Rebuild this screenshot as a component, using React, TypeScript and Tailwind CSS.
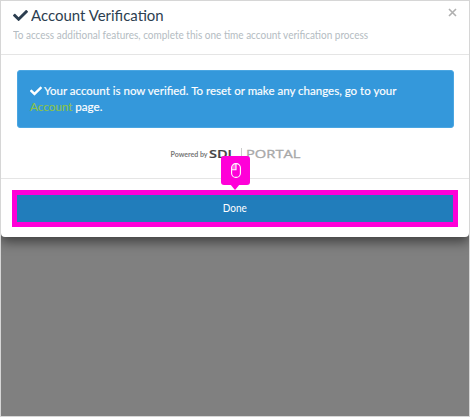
import { FaCheck } from "react-icons/fa";

function MouseIcon() {
  return (
    <svg width="10" height="15" viewBox="0 0 10 15" fill="none" stroke="white">
      <path d="M1 6.5V4.5Q1 1 5 0.8V6.5Z" fill="white" fillOpacity="0.35" stroke="none" />
      <rect x="0.6" y="0.6" width="8.8" height="13.8" rx="4.2" strokeWidth="1.1" />
      <path d="M1 6.8H5V1" strokeWidth="1.1" />
    </svg>
  );
}

function PoweredBy() {
  return (
    <svg width="132" height="14" viewBox="0 0 132 14" className="block">
      <text x="0.5" y="9.6" fontFamily="Lato, sans-serif" fontSize="7.2" fontWeight="700" fill="#777777" textLength="37" lengthAdjust="spacingAndGlyphs">
        Powered by
      </text>
      <text x="39" y="11.3" fontFamily="Open Sans, sans-serif" fontSize="11.5" fontWeight="600" fill="#444444" stroke="#444444" strokeWidth="0.2" textLength="26.5" lengthAdjust="spacingAndGlyphs">
        SDL
      </text>
      <path d="M71.5 1V13" stroke="#cccccc" strokeWidth="1" />
      <text x="76" y="11.3" fontFamily="Open Sans, sans-serif" fontSize="11.5" fill="#a8a8a8" stroke="#a8a8a8" strokeWidth="0.3" textLength="54.5" lengthAdjust="spacingAndGlyphs">
        PORTAL
      </text>
    </svg>
  );
}

export default function App() {
  return (
    <div className="h-[417px] w-[470px] overflow-hidden border border-[#d6d6d6] bg-[#808080] font-['Lato',sans-serif]">
      <div className="flex h-[236px] flex-col rounded-b-[4px] bg-white shadow-[0_5px_12px_rgba(0,0,0,0.5)]">
        <header className="flex h-[54px] shrink-0 justify-between border-b border-[#e5e5e5] px-[12px]">
          <div>
            <h1 className="mt-[3px] flex h-[22px] items-center gap-[3px] text-[16px] leading-[22px] whitespace-nowrap text-[#2c3e50]">
              <FaCheck size={15} />
              <span className="origin-left scale-x-[0.935]">Account Verification</span>
            </h1>
            <p className="mt-[2px] w-[355px] origin-left scale-x-[0.909] text-[11px] leading-[14px] whitespace-nowrap text-[#b4bcc2]">
              To access additional features, complete this one time account verification process
            </p>
          </div>
          <button className="mt-[7px] h-[9px] w-[9px]" aria-label="Close">
            <svg width="9" height="9" viewBox="0 0 9 9" stroke="#b0b0b0" strokeWidth="1.6">
              <path d="M1 1L8 8M8 1L1 8" />
            </svg>
          </button>
        </header>

        <main className="flex h-[123px] shrink-0 flex-col items-center pt-[15px]">
          <div className="h-[58px] w-[437px] rounded-[3px] border border-[#4aa6e2] bg-[#3498db] px-[12px] pt-[12px] text-[12.2px] leading-[16px] text-white [-webkit-text-stroke:0.15px]">
            <p className="flex items-center gap-[2px] whitespace-nowrap">
              <FaCheck size={12} />
              <span className="origin-left scale-x-[0.946]">
                Your account is now verified. To reset or make any changes, go to your
              </span>
            </p>
            <p className="origin-left scale-x-[0.955]">
              <a className="text-[#8bc34a]">Account</a> page.
            </p>
          </div>
          <div className="mt-[19px] pl-[2px]">
            <PoweredBy />
          </div>
        </main>

        <footer className="relative h-[59px] shrink-0 border-t border-[#e5e5e5] px-[11px] pt-[11px]">
          <button className="block h-[37px] w-[446px] border-[5px] border-[#ff00d8] bg-[#217dbb] pb-[2px] text-[11.5px] leading-[25px] text-white">
            <span className="inline-block scale-x-[0.87]">Done</span>
          </button>
          <div className="absolute -top-[23px] left-[220px] flex h-[29px] w-[29px] items-center justify-center rounded-[3px] bg-[#ff00d8]">
            <MouseIcon />
            <span className="absolute top-[28px] left-[9px] h-0 w-0 border-x-[5.5px] border-t-[6px] border-x-transparent border-t-[#ff00d8]" />
          </div>
        </footer>
      </div>
    </div>
  );
}
